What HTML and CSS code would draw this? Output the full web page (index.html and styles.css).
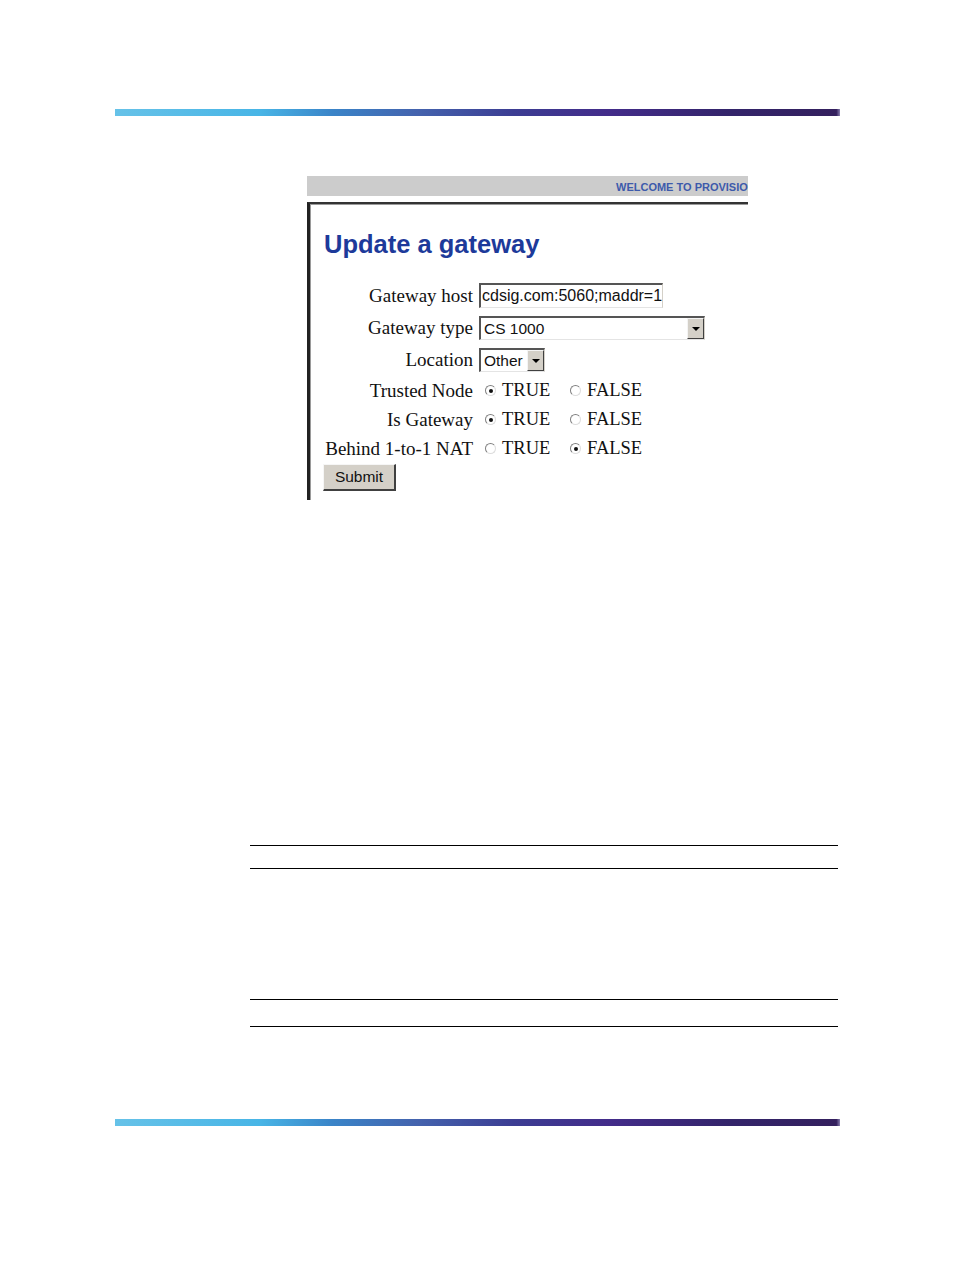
FILE: index.html
```html
<!DOCTYPE html>
<html>
<head>
<meta charset="utf-8">
<link rel="stylesheet" href="styles.css">
</head>
<body>
<div class="page">
  <div class="bar"></div>

  <div class="shot">
    <div class="shot-head">WELCOME TO PROVISIONING MANAGER</div>
    <div class="frame">
      <h1 class="title">Update a gateway</h1>
      <div class="form">
        <div class="label">Gateway host</div>
        <div class="ctrl"><div class="input">cdsig.com:5060;maddr=192.168.1.1</div></div>

        <div class="label">Gateway type</div>
        <div class="ctrl"><div class="select select-wide"><span class="sel-text">CS 1000</span><span class="arrow"><span class="tri"></span></span></div></div>

        <div class="label">Location</div>
        <div class="ctrl"><div class="select select-small"><span class="sel-text">Other</span><span class="arrow"><span class="tri"></span></span></div></div>

        <div class="label">Trusted Node</div>
        <div class="ctrl radios">
          <span class="opt"><span class="radio checked"></span>TRUE</span>
          <span class="opt"><span class="radio"></span>FALSE</span>
        </div>

        <div class="label">Is Gateway</div>
        <div class="ctrl radios">
          <span class="opt"><span class="radio checked"></span>TRUE</span>
          <span class="opt"><span class="radio"></span>FALSE</span>
        </div>

        <div class="label">Behind 1-to-1 NAT</div>
        <div class="ctrl radios">
          <span class="opt"><span class="radio"></span>TRUE</span>
          <span class="opt"><span class="radio checked"></span>FALSE</span>
        </div>
      </div>
      <div class="submit">Submit</div>
    </div>
  </div>

  <div class="rule r1"></div>
  <div class="rule r2"></div>
  <div class="rule r3"></div>
  <div class="rule r4"></div>

  <div class="bar bar-bottom"></div>
</div>
</body>
</html>
```

FILE: styles.css
```css
html, body {
  margin: 0;
  padding: 0;
  background: #ffffff;
}

.page {
  width: 954px;
  height: 1272px;
  padding-top: 109px;
  box-sizing: border-box;
  font-family: "Liberation Serif", "Times New Roman", serif;
  color: #111;
}

.bar {
  margin-left: 115px;
  width: 725px;
  height: 7px;
  background: linear-gradient(to right, #66c2e8 0%, #48b5e6 20%, #3a84c8 30%, #4462ad 42%, #3c3d93 55%, #432c8a 68%, #33246a 85%, #34205e 99.5%, #8a80b0 100%);
}

.shot {
  margin-left: 307px;
  margin-top: 60px;
  width: 441px;
}

.shot-head {
  height: 20px;
  background: #cccccc;
  padding-left: 309px;
  box-sizing: border-box;
  overflow: hidden;
  white-space: nowrap;
  font-family: "Liberation Sans", Arial, sans-serif;
  font-size: 11px;
  font-weight: bold;
  line-height: 22px;
  color: #3d5aab;
}

.frame {
  margin-top: 6px;
  height: 298px;
  box-sizing: border-box;
  border-top: 2px solid #333333;
  border-left: 3px solid #222222;
  box-shadow: inset 1px 1px 0 #9a9a9a;
  overflow: hidden;
  padding-top: 25px;
}

.title {
  margin: 0 0 0 14px;
  font-family: "Liberation Sans", Arial, sans-serif;
  font-size: 25.5px;
  line-height: 30px;
  font-weight: bold;
  color: #1d3a9a;
}

.form {
  margin-top: 24px;
  display: grid;
  grid-template-columns: 163px auto;
  grid-template-rows: 25px 24px 24px 21px 21px 21px;
  column-gap: 6px;
  row-gap: 8px;
}

.label {
  text-align: right;
  font-size: 19px;
  white-space: nowrap;
  display: flex;
  align-items: center;
  justify-content: flex-end;
}

.ctrl {
  display: flex;
  align-items: center;
}

.input {
  width: 184px;
  height: 25px;
  box-sizing: border-box;
  border-top: 2px solid #555;
  border-left: 2px solid #555;
  border-right: 1px solid #d4d0c8;
  border-bottom: 1px solid #e4e4e4;
  background: #fff;
  padding-left: 1px;
  overflow: hidden;
  white-space: nowrap;
  font-family: "Liberation Sans", Arial, sans-serif;
  font-size: 16px;
  line-height: 22px;
  color: #111;
}

.select {
  height: 24px;
  box-sizing: border-box;
  border-top: 2px solid #555;
  border-left: 2px solid #555;
  border-right: 1px solid #d4d0c8;
  border-bottom: 1px solid #e4e4e4;
  background: #fff;
  display: flex;
  align-items: stretch;
  font-family: "Liberation Sans", Arial, sans-serif;
  font-size: 15.5px;
  color: #111;
}

.select-wide { width: 226px; }
.select-small { width: 66px; }

.sel-text {
  flex: 1;
  padding-left: 3px;
  line-height: 21px;
  white-space: nowrap;
  overflow: hidden;
}

.arrow {
  width: 17px;
  box-sizing: border-box;
  background: #d4d0c8;
  border-top: 1px solid #f4f4f4;
  border-left: 1px solid #f4f4f4;
  border-right: 1px solid #404040;
  border-bottom: 1px solid #404040;
  display: flex;
  align-items: center;
  justify-content: center;
}

.tri {
  width: 0;
  height: 0;
  border-left: 4px solid transparent;
  border-right: 4px solid transparent;
  border-top: 4px solid #000;
}

.radios {
  padding-left: 6px;
  font-size: 18.5px;
}

.opt {
  display: flex;
  align-items: center;
  width: 85px;
}

.radio {
  width: 11px;
  height: 11px;
  box-sizing: border-box;
  border-radius: 50%;
  border: 1px solid #9a9a9a;
  border-top-color: #808080;
  border-left-color: #808080;
  border-bottom-color: #dcdcdc;
  border-right-color: #dcdcdc;
  background: #fff;
  margin-right: 6px;
  position: relative;
}

.radio.checked::after {
  content: "";
  position: absolute;
  left: 2.5px;
  top: 2.5px;
  width: 4px;
  height: 4px;
  border-radius: 50%;
  background: #111;
}

.submit {
  margin-top: 5px;
  margin-left: 13px;
  width: 73px;
  height: 27px;
  box-sizing: border-box;
  background: #d4d0c8;
  border-top: 1px solid #f6f6f6;
  border-left: 1px solid #f6f6f6;
  border-right: 2px solid #404040;
  border-bottom: 2px solid #404040;
  font-family: "Liberation Sans", Arial, sans-serif;
  font-size: 15.5px;
  line-height: 24px;
  text-align: center;
  color: #111;
}

.rule {
  margin-left: 250px;
  width: 588px;
  height: 1px;
  background: #000;
}

.r1 { margin-top: 345px; }
.r2 { margin-top: 22px; }
.r3 { margin-top: 130px; }
.r4 { margin-top: 26px; }

.bar-bottom {
  margin-top: 92px;
}
```
